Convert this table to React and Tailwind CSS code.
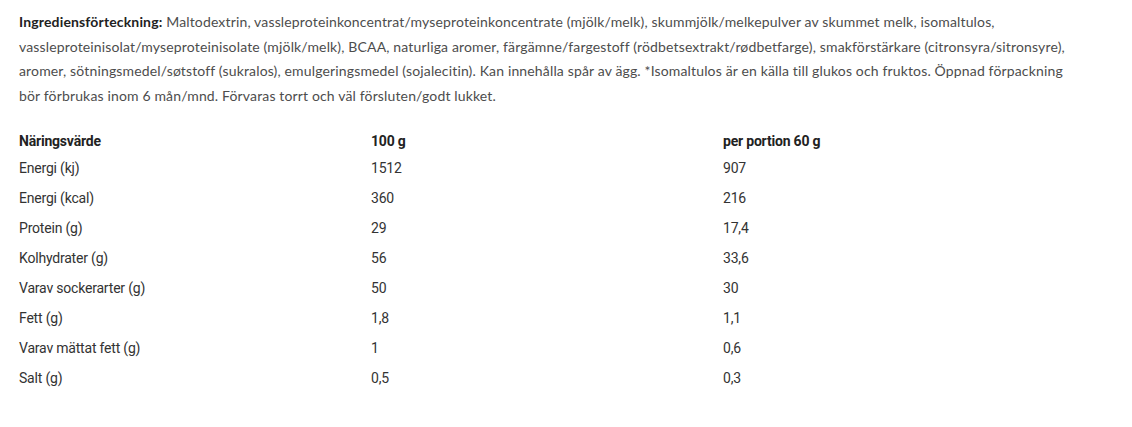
import React from "react";

const rows = [
  ["Energi (kj)", "1512", "907"],
  ["Energi (kcal)", "360", "216"],
  ["Protein (g)", "29", "17,4"],
  ["Kolhydrater (g)", "56", "33,6"],
  ["Varav sockerarter (g)", "50", "30"],
  ["Fett (g)", "1,8", "1,1"],
  ["Varav mättat fett (g)", "1", "0,6"],
  ["Salt (g)", "0,5", "0,3"],
];

function App() {
  return (
    <div className="min-h-screen bg-white px-[19px] pt-[10px]">
      <p className="text-[14px] leading-[24.5px] text-[#4d4d4d] tracking-[0.15px]" style={{ fontFamily: "Lato, 'Open Sans', sans-serif" }}>
        <strong className="font-bold text-[#222]">Ingrediensförteckning:</strong>{" "}Maltodextrin,
        vassleproteinkoncentrat/myseproteinkoncentrate (mjölk/melk), skummjölk/melkepulver av skummet melk,
        isomaltulos,<br />
        vassleproteinisolat/myseproteinisolate (mjölk/melk), BCAA, naturliga aromer,
        färgämne/fargestoff (rödbetsextrakt/rødbetfarge), smakförstärkare (citronsyra/sitronsyre),<br />
        aromer, sötningsmedel/søtstoff (sukralos), emulgeringsmedel (sojalecitin). Kan innehålla spår av ägg. *Isomaltulos
        är en källa till glukos och fruktos. Öppnad förpackning<br />
        bör förbrukas inom 6 mån/mnd. Förvaras torrt och väl försluten/godt lukket.
      </p>

      {/* näringsvärde */}
      <div
        className="mt-[21px] text-[14px] text-[#333] tracking-[-0.2px]"
        style={{ fontFamily: "Roboto, sans-serif" }}
      >
        <div className="grid grid-cols-[352px_352px_352px] h-[24px] items-center font-bold text-[#222]">
          <div>Näringsvärde</div>
          <div>100 g</div>
          <div>per portion 60 g</div>
        </div>
        {rows.map((r, i) => (
          <div key={i} className="grid grid-cols-[352px_352px_352px] h-[30px] items-center">
            <div>{r[0]}</div>
            <div>{r[1]}</div>
            <div>{r[2]}</div>
          </div>
        ))}
      </div>
    </div>
  );
}

export default App;
